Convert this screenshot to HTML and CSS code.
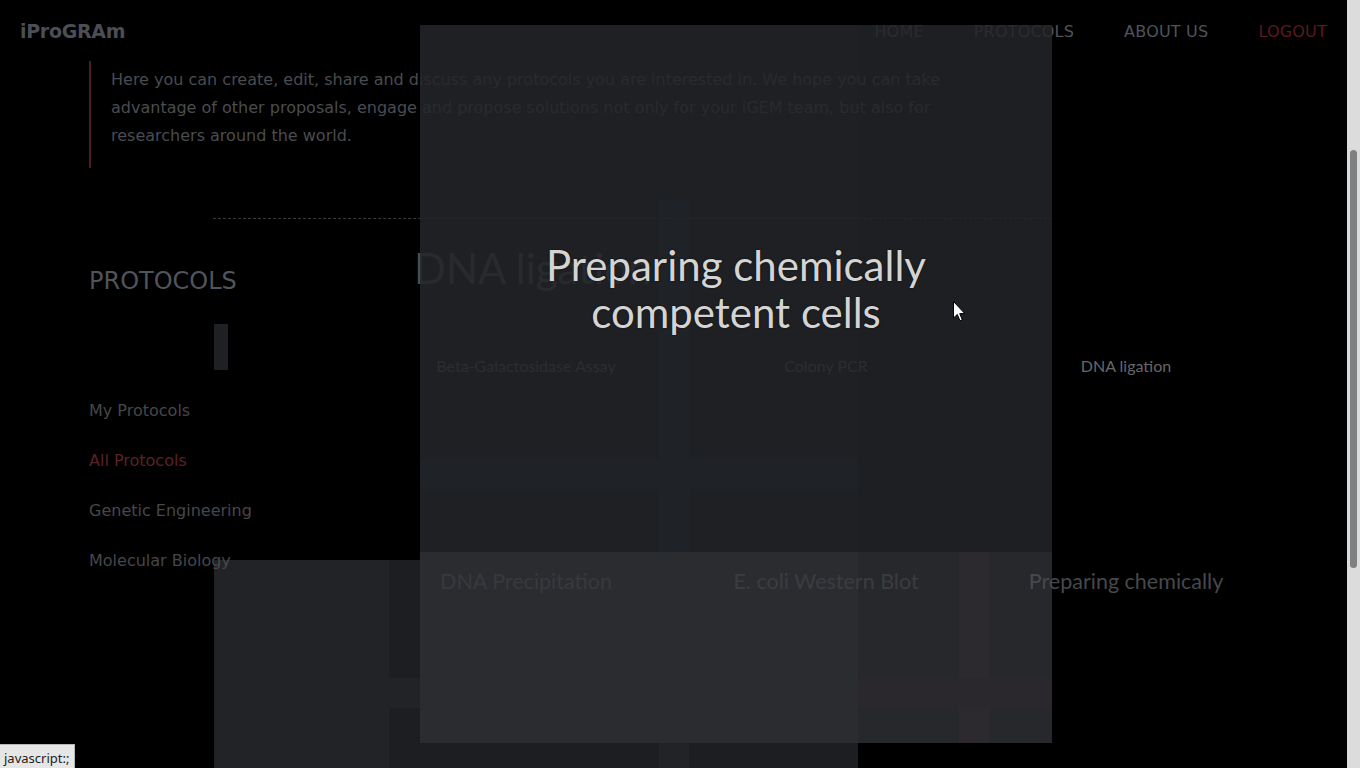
FILE: index.html
```html
<!DOCTYPE html>
<html lang="en">
<head>
<meta charset="utf-8">
<title>iProGRAm - Protocols</title>
<link rel="stylesheet" href="styles.css">
</head>
<body>
<div class="fx under">
  <div class="r r-a"></div>
  <div class="r r-card1"></div>
  <div class="r r-card2"></div>
  <div class="r r-card3"></div>
  <div class="r r-card4"></div>
  <div class="r r-tint"></div>
  <div class="r r-band"></div>
  <div class="r r-strip"></div>
  <div class="r r-b1"></div>
  <div class="r r-b2"></div>
  <div class="r r-b3"></div>
  <div class="r r-b4"></div>
  <div class="ghost">DNA ligation</div>
</div>

<div class="page">
  <header class="nav">
    <div class="logo">iProGRAm</div>
    <nav class="links">
      <a class="link">HOME</a>
      <a class="link">PROTOCOLS</a>
      <a class="link about">ABOUT US</a>
      <a class="link logout">LOGOUT</a>
    </nav>
  </header>

  <blockquote class="intro">Here you can create, edit, share and discuss any protocols you are interested in. We hope you can take advantage of other proposals, engage and propose solutions not only for your iGEM team, but also for researchers around the world.</blockquote>

  <div class="layout">
    <aside class="side">
      <h2 class="side-title">PROTOCOLS</h2>
      <ul class="side-list">
        <li>My Protocols</li>
        <li class="active">All Protocols</li>
        <li>Genetic Engineering</li>
        <li>Molecular Biology</li>
      </ul>
    </aside>
    <main class="content">
      <hr class="dash">
      <div class="content-body">
        <div class="handle"></div>
        <div class="grid">
          <div class="card">Beta-Galactosidase Assay</div>
          <div class="card">Colony PCR</div>
          <div class="card card-lit">DNA ligation</div>
          <div class="card card-big c-dim1">DNA Precipitation</div>
          <div class="card card-big c-dim2">E. coli Western Blot</div>
          <div class="card card-big c-lit">Preparing chemically</div>
        </div>
      </div>
    </main>
  </div>
</div>

<div class="fx over">
  <div class="modal">
    <h1 class="modal-title">Preparing chemically<br>competent cells</h1>
  </div>
  <svg class="cursor" width="13" height="21" viewBox="0 0 13 21"><path d="M0.5 0.5 L0.5 17 L4.3 13.4 L7 19.8 L9.3 18.8 L6.7 12.6 L11.8 12.6 Z" fill="#fff" stroke="#000" stroke-width="1"/></svg>
</div>

<div class="status">javascript:;</div>
<div class="scrollbar"><div class="thumb"></div></div>
</body>
</html>
```
FILE: styles.css
```css
html, body {
  margin: 0;
  padding: 0;
}
body {
  width: 1347px;
  height: 768px;
  overflow: hidden;
  background: #000;
  position: relative;
  font-family: "DejaVu Sans", sans-serif;
}

/* effect layers */
.fx {
  position: absolute;
  left: 0;
  top: 0;
  width: 1347px;
  height: 768px;
  pointer-events: none;
}
.under { z-index: 0; }
.over { z-index: 2; }
.r { position: absolute; }
.r-a { left: 214px; top: 560px; width: 644px; height: 208px; background: #222327; }
.r-card1 { left: 389px; top: 560px; width: 270px; height: 118px; background: #1d1e21; }
.r-card2 { left: 389px; top: 708px; width: 270px; height: 60px; background: #1d1e21; }
.r-card3 { left: 689px; top: 560px; width: 169px; height: 118px; background: #1d1e21; }
.r-card4 { left: 689px; top: 708px; width: 169px; height: 60px; background: #1d1e21; }
.r-tint { left: 420px; top: 25px; width: 438px; height: 527px; background: rgb(3, 8, 12); }
.r-band { left: 420px; top: 459px; width: 438px; height: 30px; background: rgb(8, 23, 27); }
.r-strip { left: 659px; top: 200px; width: 30px; height: 352px; background: rgb(8, 23, 27); }
.r-b1 { left: 420px; top: 552px; width: 438px; height: 191px; background: #2b2c30; }
.r-b2 { left: 858px; top: 552px; width: 194px; height: 191px; background: #27282c; }
.r-b3 { left: 959px; top: 552px; width: 30px; height: 191px; background: #2c2a2e; }
.r-b4 { left: 858px; top: 678px; width: 194px; height: 30px; background: #2a282c; }
.ghost {
  position: absolute;
  left: 414px;
  top: 245px;
  font-family: Lato, sans-serif;
  font-size: 42px;
  line-height: 47px;
  color: #4d4e52;
  white-space: nowrap;
}

/* page */
.page {
  position: relative;
  z-index: 1;
}
.nav {
  display: flex;
  justify-content: space-between;
  align-items: center;
  height: 61px;
  padding: 1px 20px 0 20px;
  box-sizing: border-box;
}
.logo {
  font-weight: bold;
  font-size: 19px;
  color: #4b4e54;
  letter-spacing: -0.3px;
}
.links {
  display: flex;
  gap: 50px;
}
.link {
  font-size: 16px;
  color: #50545b;
  letter-spacing: 0.2px;
}
.link.about { color: #4f535c; }
.link.logout { color: #5a1a1c; }

.intro {
  margin: 0 0 0 89px;
  width: 840px;
  border-left: 2px solid #4a1d20;
  padding: 5px 0 18px 20px;
  font-size: 16px;
  line-height: 28px;
  color: #4a4c50;
}

.layout {
  display: grid;
  grid-template-columns: 124px 1fr;
  margin: 50px 0 0 89px;
}
.side {
  padding-top: 49px;
  white-space: nowrap;
}
.side-title {
  margin: 0;
  font-size: 24px;
  line-height: 28px;
  font-weight: normal;
  color: #50545b;
}
.side-list {
  list-style: none;
  margin: 106px 0 0;
  padding: 0;
}
.side-list li {
  font-size: 16px;
  line-height: 20px;
  margin-bottom: 30px;
  color: #46474b;
}
.side-list li.active { color: #5a2226; }

.dash {
  margin: 0;
  border: 0;
  border-top: 1px dashed #3b3b3b;
  width: 839px;
  height: 0;
}
.content-body {
  display: flex;
  align-items: flex-start;
  margin-top: 105px;
}
.handle {
  width: 14px;
  height: 46px;
  margin-left: 1px;
  background: #1f2023;
}
.grid {
  margin-left: 148px;
  display: grid;
  grid-template-columns: repeat(3, 300px);
  grid-auto-rows: 215px;
}
.card {
  padding-top: 32px;
  text-align: center;
  font-family: Lato, sans-serif;
  font-size: 16px;
  line-height: 20px;
  color: #5d5e62;
  white-space: nowrap;
}
.card-lit { color: #66676b; }
.card-big { font-size: 21.5px; padding-top: 32px; }
.c-dim1 { color: #38393d; }
.c-dim2 { color: #3b3c40; }
.c-lit { color: #47484c; }

/* modal */
.modal {
  position: absolute;
  left: 420px;
  top: 25px;
  width: 632px;
  height: 527px;
  padding-top: 217px;
  box-sizing: border-box;
  background: rgba(35, 36, 40, 0.85);
  text-align: center;
}
.modal-title {
  margin: 0;
  font-family: Lato, sans-serif;
  font-weight: normal;
  font-size: 42px;
  line-height: 47px;
  color: #d4d4d4;
  text-shadow: 0 0 2px rgba(0, 0, 0, 0.7);
}
.cursor {
  position: absolute;
  left: 953px;
  top: 301px;
}

.status {
  position: absolute;
  left: 0;
  bottom: 0;
  z-index: 3;
  height: 24px;
  box-sizing: border-box;
  padding: 4px 5px 0 4px;
  background: #e6e6e6;
  border-top: 1px solid #b8b8b8;
  border-right: 1px solid #b8b8b8;
  font-family: "Noto Sans", sans-serif;
  font-size: 13px;
  line-height: 18px;
  color: #222;
}
.scrollbar {
  position: fixed;
  right: 0;
  top: 0;
  width: 13px;
  height: 768px;
  background: #dcdcdc;
  padding-top: 150px;
  box-sizing: border-box;
  z-index: 4;
}
.thumb {
  margin-left: 3px;
  width: 7px;
  height: 418px;
  border-radius: 4px;
  background: #7e8081;
}
```
